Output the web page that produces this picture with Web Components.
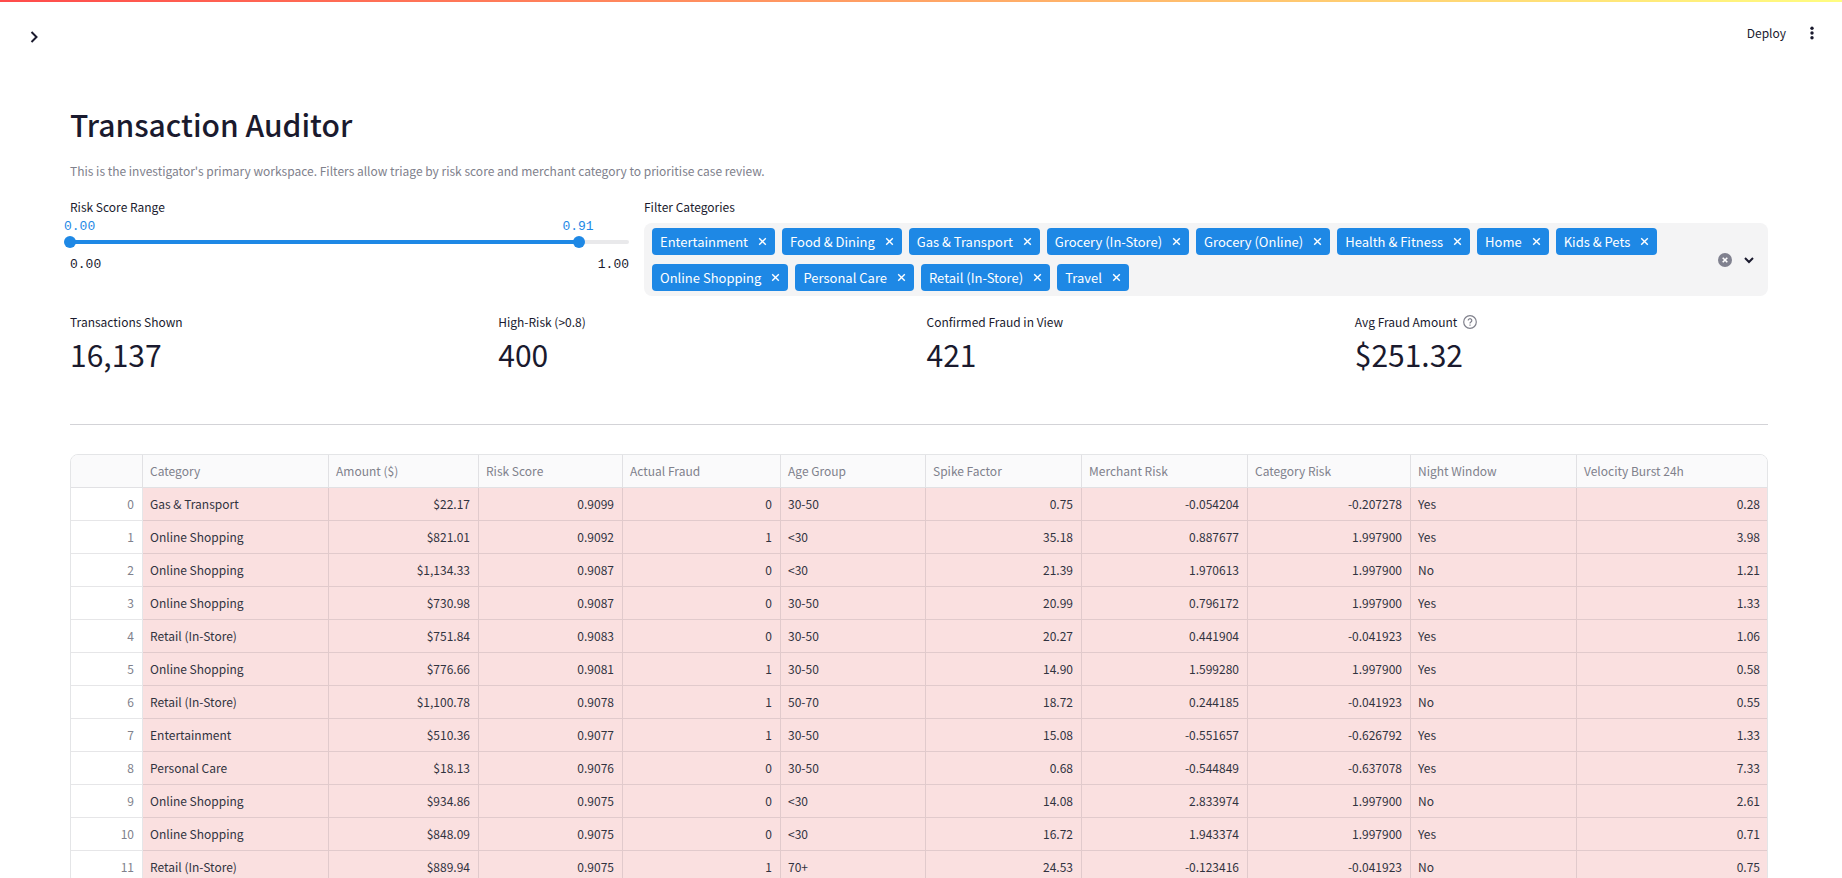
<!DOCTYPE html>
<html lang="en">
<head>
<meta charset="utf-8">
<meta name="viewport" content="width=device-width, initial-scale=1">
<title>Transaction Auditor</title>
<style>
  html { height: 100%; overflow: hidden; }
  body {
    margin: 0; height: 100%; overflow: hidden; background: #fff;
    --ink: #1a1a2e; --muted: #80818c; --blue: #1e88e5; --line: rgba(49, 51, 63, .12);
    color: var(--ink);
    font: 12px/20px "Noto Sans CJK SC", "Noto Sans", sans-serif;
  }
</style>
</head>
<body>
<auditor-app></auditor-app>

<script>
const define = (name, html, setup) => customElements.define(name, class extends HTMLElement {
  constructor() {
    super();
    const t = document.createElement('template');
    t.innerHTML = html;
    this.attachShadow({ mode: 'open' }).append(t.content.cloneNode(true));
  }
  connectedCallback() { if (setup) setup(this, this.shadowRoot); }
});

define('app-header', `
  <style>
    :host { display: block; border-top: 2px solid; border-image: linear-gradient(90deg, #ff4b4b, #fffd80) 1; }
    header { display: flex; align-items: center; justify-content: space-between; padding: 22px 24px 0 22px; height: 46px; box-sizing: border-box; }
    button { border: 0; background: none; padding: 0; color: inherit; font: inherit; display: flex; align-items: center; justify-content: center; cursor: pointer; }
    .side { width: 24px; height: 24px; margin-top: 2px; }
    div { display: flex; gap: 20px; align-items: center; height: 20px; margin-bottom: 6px; }
    .menu { width: 12px; height: 20px; }
  </style>
  <header>
    <button class="side" aria-label="Open sidebar"><svg width="12" height="12" viewBox="0 0 12 12" fill="none" stroke="currentColor" stroke-width="2"><path d="M3.5 1l5 5-5 5"/></svg></button>
    <div>
      <button>Deploy</button>
      <button class="menu" aria-label="Main menu"><svg width="4" height="14" viewBox="0 0 4 14" fill="currentColor"><circle cx="2" cy="2.2" r="1.7"/><circle cx="2" cy="7" r="1.7"/><circle cx="2" cy="11.8" r="1.7"/></svg></button>
    </div>
  </header>`);

define('range-slider', `
  <style>
    :host { display: block; }
    label { display: block; }
    .values, .ends { display: flex; justify-content: space-between; font: 13px/16px "Liberation Mono", monospace; }
    .values { color: var(--blue); margin: 2px -6px 0; }
    .values output:last-child { margin-right: calc(9% - 10px); }
    .track { position: relative; height: 12px; margin: 1px 0 9px; display: flex; align-items: center; }
    .bar { flex: 1; height: 4px; border-radius: 4px; background: linear-gradient(90deg, var(--blue) 91%, #e9e9eb 91%); }
    input { position: absolute; left: -6px; top: 0; width: calc(100% + 12px); height: 12px; margin: 0; appearance: none; background: none; pointer-events: none; }
    input::-webkit-slider-thumb { appearance: none; width: 12px; height: 12px; border-radius: 50%; background: var(--blue); pointer-events: auto; }
    input::-moz-range-thumb { width: 12px; height: 12px; border: 0; border-radius: 50%; background: var(--blue); pointer-events: auto; }
  </style>
  <label for="low">Risk Score Range</label>
  <div class="values"><output for="low">0.00</output><output for="high">0.91</output></div>
  <div class="track">
    <div class="bar"></div>
    <input id="low" type="range" min="0" max="1" step="0.01" value="0">
    <input id="high" type="range" min="0" max="1" step="0.01" value="0.91" aria-label="Maximum risk score">
  </div>
  <div class="ends"><span>0.00</span><span>1.00</span></div>`);

define('filter-tag', `
  <style>
    :host { display: flex; align-items: center; gap: 10px; height: 27px; padding: 0 8px; border-radius: 4px; background: var(--blue); color: #fff; font-size: 13px; white-space: nowrap; }
    button { border: 0; background: none; padding: 0; width: 9px; height: 16px; color: inherit; display: flex; align-items: center; cursor: pointer; }
  </style>
  <span><slot></slot></span>
  <button aria-label="Remove"><svg width="9" height="9" viewBox="0 0 9 9" stroke="currentColor" stroke-width="1.4"><path d="M1.2 1.2l6.6 6.6M7.8 1.2l-6.6 6.6"/></svg></button>`);

define('multi-select', `
  <style>
    :host { display: block; }
    label { display: block; }
    .box { display: flex; align-items: center; gap: 12px; margin-top: 6px; padding: 5px 14px 5px 8px; border-radius: 8px; background: #f4f4f5; }
    .tags { flex: 1; display: flex; flex-wrap: wrap; gap: 9px 7px; min-width: 0; margin-right: 36px; }
    input { flex: 1; min-width: 20px; width: 20px; border: 0; padding: 0; height: 27px; background: none; font: inherit; outline: 0; }
    button { border: 0; background: none; padding: 0; color: inherit; display: flex; cursor: pointer; }
  </style>
  <label for="search">Filter Categories</label>
  <div class="box">
    <div class="tags"><slot></slot><input id="search" role="combobox" aria-expanded="false"></div>
    <button aria-label="Clear all"><svg width="14" height="14" viewBox="0 0 14 14"><circle cx="7" cy="7" r="7" fill="#80818f"/><path d="M4.7 4.7l4.6 4.6M9.3 4.7L4.7 9.3" stroke="#fff" stroke-width="1.6"/></svg></button>
    <button aria-label="Open options"><svg width="10" height="12" viewBox="0 0 10 12" fill="none" stroke="currentColor" stroke-width="2"><path d="M1 4l4 4 4-4"/></svg></button>
  </div>`);

define('metric-card', `
  <style>
    :host { display: block; }
    .label { display: flex; align-items: center; gap: 6px; height: 20px; }
    .value { font-size: 30px; line-height: 44px; }
  </style>
  <div class="label"><slot name="label"></slot><slot name="help"></slot></div>
  <div class="value"><slot></slot></div>`);

define('help-icon', `
  <style>:host { display: block; height: 14px; color: #80818c; } svg { display: block; }</style>
  <svg width="14" height="14" viewBox="0 0 14 14" fill="none" stroke="currentColor" stroke-width="1.2" role="img" aria-label="Help"><circle cx="7" cy="7" r="6.3"/><path d="M5.2 5.5a1.8 1.8 0 1 1 2.7 1.6c-.6.4-.9.7-.9 1.3"/><path d="M7 9.6v1.2"/></svg>`);

const COLUMNS = [['', 72, 1], ['Category', 186, 0], ['Amount ($)', 150, 1], ['Risk Score', 144, 1], ['Actual Fraud', 158, 1], ['Age Group', 145, 0], ['Spike Factor', 156, 1], ['Merchant Risk', 166, 1], ['Category Risk', 163, 1], ['Night Window', 166, 0], ['Velocity Burst 24h', 191, 1]];
const ROWS = `Gas & Transport|$22.17|0.9099|0|30-50|0.75|-0.054204|-0.207278|Yes|0.28
Online Shopping|$821.01|0.9092|1|<30|35.18|0.887677|1.997900|Yes|3.98
Online Shopping|$1,134.33|0.9087|0|<30|21.39|1.970613|1.997900|No|1.21
Online Shopping|$730.98|0.9087|0|30-50|20.99|0.796172|1.997900|Yes|1.33
Retail (In-Store)|$751.84|0.9083|0|30-50|20.27|0.441904|-0.041923|Yes|1.06
Online Shopping|$776.66|0.9081|1|30-50|14.90|1.599280|1.997900|Yes|0.58
Retail (In-Store)|$1,100.78|0.9078|1|50-70|18.72|0.244185|-0.041923|No|0.55
Entertainment|$510.36|0.9077|1|30-50|15.08|-0.551657|-0.626792|Yes|1.33
Personal Care|$18.13|0.9076|0|30-50|0.68|-0.544849|-0.637078|Yes|7.33
Online Shopping|$934.86|0.9075|0|<30|14.08|2.833974|1.997900|No|2.61
Online Shopping|$848.09|0.9075|0|<30|16.72|1.943374|1.997900|Yes|0.71
Retail (In-Store)|$889.94|0.9075|1|70+|24.53|-0.123416|-0.041923|No|0.75`.split('\n').map(r => r.split('|'));

define('transaction-table', `
  <style>
    :host { display: block; border: 1px solid #e4e5e7; border-radius: 8px; overflow: hidden; }
    table { width: 100%; table-layout: fixed; border-collapse: separate; border-spacing: 0; }
    th, td { box-sizing: border-box; height: 33px; padding: 0 8px 0 7px; border: solid var(--line); border-width: 0 1px 1px 0; text-align: left; font-weight: 400; white-space: nowrap; overflow: hidden; }
    tr > :last-child { border-right: 0; }
    th { color: var(--muted); }
    thead th, thead td { background: #fafafb; }
    tbody td { background: #fae0e0; color: #31333f; }
    tbody th, .num { text-align: right; }
  </style>
  <table><colgroup></colgroup><thead><tr></tr></thead><tbody></tbody></table>`, (host, root) => {
  const cell = (tag, text, num) => {
    const el = document.createElement(tag);
    el.textContent = text;
    if (num) el.className = 'num';
    return el;
  };
  const head = root.querySelector('thead tr');
  COLUMNS.forEach(([name, width]) => {
    const col = document.createElement('col');
    col.style.width = width + 'px';
    root.querySelector('colgroup').append(col);
    head.append(cell(name ? 'th' : 'td', name));
  });
  ROWS.forEach((row, i) => {
    const tr = document.createElement('tr');
    tr.append(cell('th', i), ...row.map((text, c) => cell('td', text, COLUMNS[c + 1][2])));
    root.querySelector('tbody').append(tr);
  });
});

define('auditor-app', `
  <style>
    :host { display: block; }
    main { padding: 52px 74px 0 70px; }
    h1 { margin: 0; font-size: 30px; line-height: 48px; font-weight: 500; }
    .caption { margin: 13px 0 16px; color: var(--muted); }
    .filters { display: grid; grid-template-columns: 559fr 1124fr; gap: 15px; }
    .metrics { display: grid; grid-template-columns: repeat(4, 1fr); gap: 15px; margin-top: 16px; }
    hr { margin: 48px 0 29px; border: 0; border-top: 1px solid #d3d3d7; }
  </style>
  <app-header></app-header>
  <main>
    <h1>Transaction Auditor</h1>
    <p class="caption">This is the investigator's primary workspace. Filters allow triage by risk score and merchant category to prioritise case review.</p>
    <section class="filters">
      <range-slider></range-slider>
      <multi-select>
        <filter-tag>Entertainment</filter-tag><filter-tag>Food &amp; Dining</filter-tag><filter-tag>Gas &amp; Transport</filter-tag><filter-tag>Grocery (In-Store)</filter-tag><filter-tag>Grocery (Online)</filter-tag><filter-tag>Health &amp; Fitness</filter-tag><filter-tag>Home</filter-tag><filter-tag>Kids &amp; Pets</filter-tag><filter-tag>Online Shopping</filter-tag><filter-tag>Personal Care</filter-tag><filter-tag>Retail (In-Store)</filter-tag><filter-tag>Travel</filter-tag>
      </multi-select>
    </section>
    <section class="metrics">
      <metric-card><span slot="label">Transactions Shown</span>16,137</metric-card>
      <metric-card><span slot="label">High-Risk (&gt;0.8)</span>400</metric-card>
      <metric-card><span slot="label">Confirmed Fraud in View</span>421</metric-card>
      <metric-card><span slot="label">Avg Fraud Amount</span><help-icon slot="help"></help-icon>$251.32</metric-card>
    </section>
    <hr>
    <transaction-table></transaction-table>
  </main>`);
</script>
</body>
</html>
